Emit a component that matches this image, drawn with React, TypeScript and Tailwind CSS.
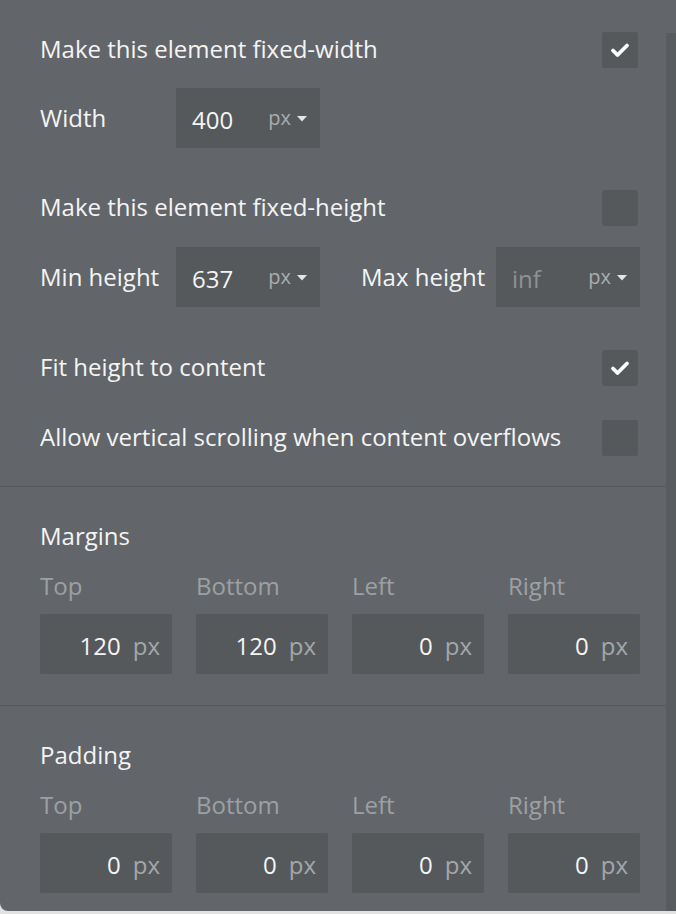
import React from "react";

const font = { fontFamily: '"Open Sans", "Liberation Sans", sans-serif' };

function Check({ on }: { on?: boolean }) {
  return (
    <div className="mr-[2px] flex h-[36px] w-[36px] shrink-0 items-center justify-center rounded-[3px] bg-[#55595c]">
      {on && (
        <svg width="20" height="16" viewBox="0 0 20 16">
          <path d="M3 8.5 L7.5 13 L17 3.5" fill="none" stroke="#ffffff" strokeWidth="3.8" strokeLinecap="round" strokeLinejoin="round" />
        </svg>
      )}
    </div>
  );
}

function Caret() {
  return (
    <svg width="10" height="6" viewBox="0 0 10 6" className="ml-[6px] mt-[1px]">
      <path d="M0 0 L10 0 L5 5.5 Z" fill="#e4e5e6" />
    </svg>
  );
}

function UnitSelect({ value, placeholder }: { value: string; placeholder?: boolean }) {
  return (
    <div className="flex h-[60px] w-[144px] shrink-0 items-center justify-between bg-[#55595c] pl-[16px] pr-[13px]">
      <span className={"pt-[3px] " + (placeholder ? "text-[#8e9194]" : "text-[#f4f4f4]")}>{value}</span>
      <span className="flex items-center text-[20px] text-[#a9acae]">
        px
        <Caret />
      </span>
    </div>
  );
}

function CheckRow({ label, on }: { label: string; on?: boolean }) {
  return (
    <div className="flex h-[36px] items-center justify-between">
      <span className="-mt-[2px]">{label}</span>
      <Check on={on} />
    </div>
  );
}

function BoxInput({ value }: { value: string }) {
  return (
    <div className="flex h-[60px] items-center justify-end gap-[12px] rounded-[2px] bg-[#55595c] pr-[12px] pt-[3px]">
      <span className="text-[#f4f4f4]">{value}</span>
      <span className="text-[#a4a7a9]">px</span>
    </div>
  );
}

function Spacing({ title, values }: { title: string; values: string[] }) {
  const labels = ["Top", "Bottom", "Left", "Right"];
  return (
    <div className="border-t border-[#56595c] pb-[31px] pl-[40px] pr-[26px] pt-[33px]">
      <div className="h-[32px] leading-[32px]">{title}</div>
      <div className="mt-[18px] grid grid-cols-4 gap-x-[24px]">
        {labels.map((l) => (
          <div key={l} className="h-[32px] leading-[32px] text-[#9da0a3]">{l}</div>
        ))}
      </div>
      <div className="mt-[12px] grid grid-cols-4 gap-x-[24px]">
        {values.map((v, i) => (
          <BoxInput key={i} value={v} />
        ))}
      </div>
    </div>
  );
}

export default function App() {
  return (
    <div className="h-[914px] w-[676px] bg-[#e2e2e2]" style={font}>
      <div className="flex h-[911px] overflow-hidden rounded-bl-[8px] bg-[#62666a] text-[24px] text-[#f4f4f4]">
        <div className="w-[666px] shrink-0">
          <div className="pl-[40px] pr-[26px] pt-[32px]">
            <CheckRow label="Make this element fixed-width" on />
            <div className="mt-[20px] flex items-center">
              <span className="w-[136px] shrink-0">Width</span>
              <UnitSelect value="400" />
            </div>
            <div className="mt-[42px]">
              <CheckRow label="Make this element fixed-height" />
            </div>
            <div className="mt-[21px] flex items-center">
              <span className="w-[136px] shrink-0">Min height</span>
              <UnitSelect value="637" />
              <span className="ml-[41px] w-[135px] shrink-0">Max height</span>
              <UnitSelect value="inf" placeholder />
            </div>
            <div className="mt-[43px]">
              <CheckRow label="Fit height to content" on />
            </div>
            <div className="mt-[34px]">
              <CheckRow label="Allow vertical scrolling when content overflows" />
            </div>
          </div>
          <div className="mt-[30px]">
            <Spacing title="Margins" values={["120", "120", "0", "0"]} />
          </div>
          <div>
            <Spacing title="Padding" values={["0", "0", "0", "0"]} />
          </div>
        </div>
        <div className="mt-[33px] w-[10px] shrink-0 bg-[#585c5f]" />
      </div>
    </div>
  );
}
